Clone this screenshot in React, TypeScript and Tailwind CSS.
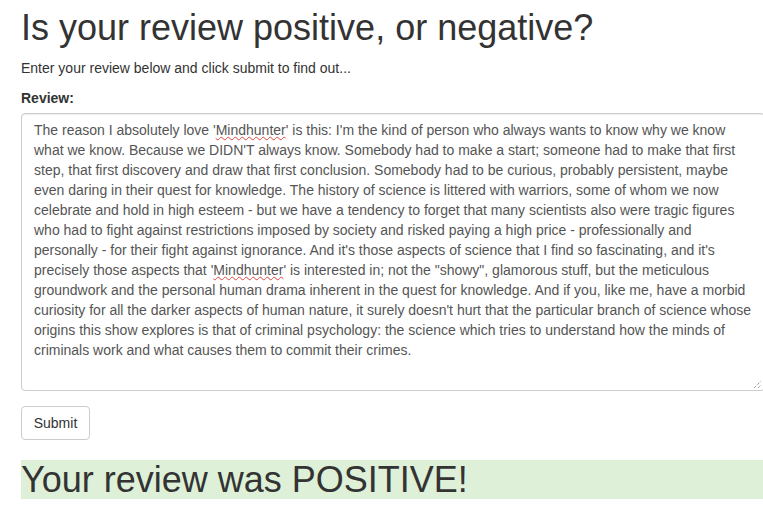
const lines: React.ReactNode[] = [
  <>
    The reason I absolutely love '<Spell>Mindhunter</Spell>' is this: I'm the kind of person who always wants to know why we know
  </>,
  "what we know. Because we DIDN'T always know. Somebody had to make a start; someone had to make that first",
  "step, that first discovery and draw that first conclusion. Somebody had to be curious, probably persistent, maybe",
  "even daring in their quest for knowledge. The history of science is littered with warriors, some of whom we now",
  "celebrate and hold in high esteem - but we have a tendency to forget that many scientists also were tragic figures",
  "who had to fight against restrictions imposed by society and risked paying a high price - professionally and",
  "personally - for their fight against ignorance. And it's those aspects of science that I find so fascinating, and it's",
  <>
    precisely those aspects that '<Spell>Mindhunter</Spell>' is interested in; not the "showy", glamorous stuff, but the meticulous
  </>,
  "groundwork and the personal human drama inherent in the quest for knowledge. And if you, like me, have a morbid",
  "curiosity for all the darker aspects of human nature, it surely doesn't hurt that the particular branch of science whose",
  "origins this show explores is that of criminal psychology: the science which tries to understand how the minds of",
  "criminals work and what causes them to commit their crimes.",
];

function Spell({ children }: { children: React.ReactNode }) {
  return (
    <span className="underline decoration-wavy decoration-[#e0443e] decoration-1 underline-offset-[1px]">
      {children}
    </span>
  );
}

const App = () => {
  return (
    <div className="w-[763px] h-[505px] overflow-hidden bg-white font-['Liberation_Sans',Arial,sans-serif] text-[14px] leading-[20px] text-[#333]">
      <div className="w-[800px] pl-[21px] pt-[8px]">
        <h1 className="text-[36px] leading-[40px] font-normal mb-[10px]">Is your review positive, or negative?</h1>
        <p className="mb-[10px]">Enter your review below and click submit to find out...</p>

        <div className="mb-[15px]">
          <label className="block font-bold mb-[5px]">Review:</label>
          <div className="relative w-[744px] h-[278px] border border-[#ccc] rounded-[4px] shadow-[inset_0_1px_1px_rgba(0,0,0,0.075)] px-[12px] py-[6px] text-[#555] whitespace-nowrap">
            {lines.map((l, i) => (
              <div key={i}>{l}</div>
            ))}
            <svg className="absolute right-[2px] bottom-[1px]" width="9" height="9" viewBox="0 0 9 9">
              <line x1="1" y1="8" x2="8" y2="1" stroke="#777" strokeWidth="1" strokeDasharray="1 1" />
              <line x1="5" y1="8" x2="8" y2="5" stroke="#777" strokeWidth="1" strokeDasharray="1 1" />
            </svg>
          </div>
        </div>

        <button className="h-[34px] w-[69px] border border-[#ccc] rounded-[4px] bg-white text-[#333]">Submit</button>

        <h1 className="mt-[20px] w-[760px] bg-[#dff0d8] text-[36px] leading-[39px] font-normal">Your review was POSITIVE!</h1>
      </div>
    </div>
  );
};

export default App;
